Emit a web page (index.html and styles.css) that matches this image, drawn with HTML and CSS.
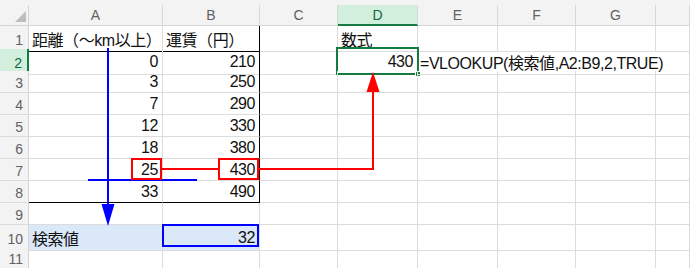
FILE: index.html
```html
<!DOCTYPE html>
<html lang="ja">
<head>
<meta charset="utf-8">
<title>VLOOKUP 近似一致</title>
<link rel="stylesheet" href="styles.css">
</head>
<body>
<div class="sheet">
  <div class="row head">
    <div class="corner"><span class="tri"></span></div>
    <div class="ch">A</div>
    <div class="ch">B</div>
    <div class="ch">C</div>
    <div class="ch active">D</div>
    <div class="ch">E</div>
    <div class="ch">F</div>
    <div class="ch">G</div>
    <div class="ch"></div>
  </div>

  <div class="row first">
    <div class="rh">1</div>
    <div class="c tb-b">距離（～km以上）</div>
    <div class="c tb-b tb-r">運賃（円）</div>
    <div class="c"></div>
    <div class="c">数式</div>
    <div class="c"></div>
    <div class="c"></div>
    <div class="c"></div>
    <div class="c"></div>
  </div>

  <div class="row">
    <div class="rh active">2</div>
    <div class="c num">0</div>
    <div class="c num tb-r">210</div>
    <div class="c"></div>
    <div class="c num selected">430<span class="sel"><span class="handle"></span></span></div>
    <div class="c spill">=VLOOKUP(検索値,A2:B9,2,TRUE)</div>
    <div class="c spill"></div>
    <div class="c spill"></div>
    <div class="c"></div>
  </div>

  <div class="row">
    <div class="rh">3</div>
    <div class="c num">3</div>
    <div class="c num tb-r">250</div>
    <div class="c"></div><div class="c"></div><div class="c"></div><div class="c"></div><div class="c"></div><div class="c"></div>
  </div>

  <div class="row">
    <div class="rh">4</div>
    <div class="c num">7</div>
    <div class="c num tb-r">290</div>
    <div class="c"></div><div class="c"></div><div class="c"></div><div class="c"></div><div class="c"></div><div class="c"></div>
  </div>

  <div class="row">
    <div class="rh">5</div>
    <div class="c num">12</div>
    <div class="c num tb-r">330</div>
    <div class="c"></div><div class="c"></div><div class="c"></div><div class="c"></div><div class="c"></div><div class="c"></div>
  </div>

  <div class="row">
    <div class="rh">6</div>
    <div class="c num">18</div>
    <div class="c num tb-r">380</div>
    <div class="c"></div><div class="c"></div><div class="c"></div><div class="c"></div><div class="c"></div><div class="c"></div>
  </div>

  <div class="row">
    <div class="rh">7</div>
    <div class="c num">25</div>
    <div class="c num tb-r">430</div>
    <div class="c"></div><div class="c"></div><div class="c"></div><div class="c"></div><div class="c"></div><div class="c"></div>
  </div>

  <div class="row">
    <div class="rh">8</div>
    <div class="c num tb-b">33</div>
    <div class="c num tb-b tb-r">490</div>
    <div class="c"></div><div class="c"></div><div class="c"></div><div class="c"></div><div class="c"></div><div class="c"></div>
  </div>

  <div class="row">
    <div class="rh">9</div>
    <div class="c"></div><div class="c"></div><div class="c"></div><div class="c"></div><div class="c"></div><div class="c"></div><div class="c"></div><div class="c"></div>
  </div>

  <div class="row">
    <div class="rh">10</div>
    <div class="c fill">検索値</div>
    <div class="c num fill">32</div>
    <div class="c"></div><div class="c"></div><div class="c"></div><div class="c"></div><div class="c"></div><div class="c"></div>
  </div>

  <div class="row">
    <div class="rh">11</div>
    <div class="c"></div><div class="c"></div><div class="c"></div><div class="c"></div><div class="c"></div><div class="c"></div><div class="c"></div><div class="c"></div>
  </div>

  <!-- lookup annotations drawn over the grid -->
  <svg class="marks" width="690" height="268" viewBox="0 0 690 268" aria-hidden="true">
    <g fill="none" stroke="#0000ff" stroke-width="2">
      <line x1="108" y1="48" x2="108" y2="206"/>
      <line x1="88" y1="180" x2="197" y2="180"/>
      <rect x="163" y="225" width="95" height="21"/>
    </g>
    <polygon points="101.5,204 114.5,204 108,226" fill="#0000ff"/>
    <g fill="none" stroke="#ff0000" stroke-width="2">
      <rect x="132" y="159" width="29" height="20"/>
      <rect x="219" y="159" width="39" height="20"/>
      <line x1="162" y1="169" x2="218" y2="169"/>
      <polyline points="259,169 373,169 373,90"/>
    </g>
    <polygon points="373,72 366.5,92 379.5,92" fill="#ff0000"/>
  </svg>
</div>
</body>
</html>
```

FILE: styles.css
```css
* {
  box-sizing: border-box;
}

html, body {
  margin: 0;
  background: #ffffff;
}

.sheet {
  position: relative;
  width: 690px;
  height: 268px;
  overflow: hidden;
  font-family: "Liberation Sans", "Noto Sans CJK JP", sans-serif;
}

.row {
  display: grid;
  grid-template-columns: 29px 134px 97px 78px 80px 80px 78px 80px 34px;
  height: 22px;
}

/* column header strip */
.row.head {
  height: 26px;
  padding-top: 5px;
  background: #f3f3f3;
}

.row.first {
  height: 23px;
}

.corner {
  display: flex;
  align-items: flex-end;
  justify-content: flex-end;
  padding: 0 2px 3px 0;
  border-right: 1px solid #d4d4d4;
  border-bottom: 1px solid #d4d4d4;
}

.tri {
  width: 0;
  height: 0;
  border-left: 11px solid transparent;
  border-bottom: 11px solid #bdbdbd;
}

.ch {
  display: flex;
  align-items: center;
  justify-content: center;
  font-size: 14px;
  color: #616161;
  border-right: 1px solid #d9d9d9;
  border-bottom: 1px solid #d4d4d4;
}

.ch.active {
  background: #d2eedd;
  color: #0e6b39;
  border-bottom: 2px solid #137a40;
}

/* row numbers */
.rh {
  display: flex;
  align-items: center;
  justify-content: flex-end;
  padding: 2px 5px 0 0;
  font-size: 14px;
  color: #616161;
  background: #f3f3f3;
  border-right: 1px solid #d4d4d4;
  border-bottom: 1px solid #dcdcdc;
}

.rh.active {
  background: #d2eedd;
  color: #0e6b39;
  border-right: 2px solid #137a40;
}

/* cells */
.c {
  position: relative;
  display: flex;
  align-items: center;
  padding: 1px 3px 0 3px;
  font-size: 16px;
  letter-spacing: -0.45px;
  color: #111111;
  white-space: nowrap;
  border-right: 1px solid #dcdcdc;
  border-bottom: 1px solid #dcdcdc;
}

.c.num {
  justify-content: flex-end;
  padding-right: 4px;
}

.c.spill {
  border-right-color: transparent;
  padding-left: 2px;
}

.c.tb-b {
  border-bottom-color: #000000;
}

.c.tb-r {
  border-right-color: #000000;
}

.c.fill {
  background: #dae8f7;
}

/* active cell frame with fill handle */
.sel {
  position: absolute;
  left: -2px;
  top: -2px;
  right: -2px;
  bottom: -1px;
  border: 2px solid #137a40;
}

.handle {
  position: absolute;
  right: -4px;
  bottom: -4px;
  width: 6px;
  height: 6px;
  background: #137a40;
  border: 1px solid #ffffff;
}

.marks {
  position: absolute;
  left: 0;
  top: 0;
  pointer-events: none;
}
```
